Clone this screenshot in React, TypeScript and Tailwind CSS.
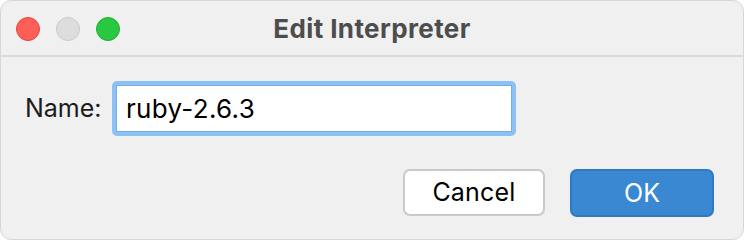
import React from "react";

export default function App() {
  return (
    <div className="w-[744px] h-[240px] bg-white" style={{ fontFamily: 'Inter, "Liberation Sans", Arial, sans-serif' }}>
      <div className="w-[744px] h-[240px] rounded-[11px] bg-[#f0f0f0] border border-[#d6d6d6] flex flex-col overflow-hidden">
        <div className="relative h-[56px] shrink-0 border-b-2 border-[#dadada] flex items-center">
          <div className="flex items-center gap-[16px] pl-[15px] pt-[1px]">
            <div className="w-[24px] h-[24px] rounded-full bg-[#fe5f57] border border-[#e2463f]" />
            <div className="w-[24px] h-[24px] rounded-full bg-[#dddddd] border border-[#c9c9c9]" />
            <div className="w-[24px] h-[24px] rounded-full bg-[#28c840] border border-[#1fae33]" />
          </div>
          <div className="absolute inset-0 flex items-center justify-center pt-[1px]">
            <span className="text-[26px] font-bold text-[#4d4d4d] leading-none tracking-[0.4px]">Edit Interpreter</span>
          </div>
        </div>
        <div className="flex-1 flex flex-col pt-[24px] pl-[24px] pr-[29px]">
          <div className="flex items-center">
            <span className="text-[25px] text-[#1c1c1c] leading-none w-[87px]">Name:</span>
            <div className="w-[404px] h-[55px] rounded-[5px] bg-[#8cc1f6] p-[4px]">
              <div className="w-full h-full bg-white border border-[#78ade2] flex items-center pl-[9px]">
                <span className="text-[26px] text-black leading-none tracking-[0.3px]">ruby-2.6.3</span>
              </div>
            </div>
          </div>
          <div className="flex justify-end gap-[25px] mt-[33px]">
            <div className="w-[142px] h-[47px] rounded-[7px] bg-white border-2 border-[#c9c9c9] flex items-center justify-center">
              <span className="text-[25px] text-black leading-none tracking-[0.2px]">Cancel</span>
            </div>
            <div className="w-[144px] h-[48px] rounded-[7px] bg-[#3a88d2] border-2 border-[#2f78c2] flex items-center justify-center">
              <span className="text-[25px] text-white leading-none">OK</span>
            </div>
          </div>
        </div>
      </div>
    </div>
  );
}
